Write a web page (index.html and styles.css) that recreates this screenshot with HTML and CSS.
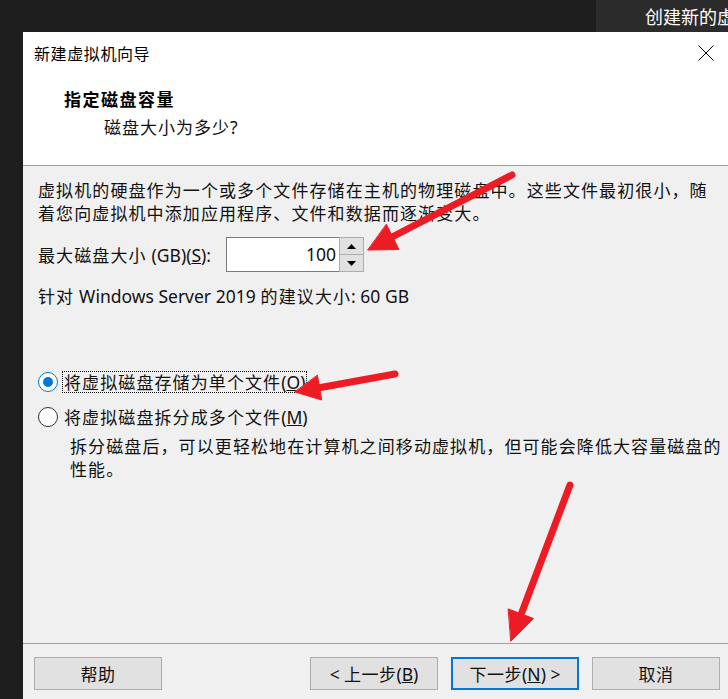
FILE: index.html
```html
<!DOCTYPE html>
<html lang="zh-CN">
<head>
<meta charset="utf-8">
<title>新建虚拟机向导</title>
<link rel="stylesheet" href="styles.css">
</head>
<body>
<div class="screen">
  <div class="topbar">
    <div class="topbar-fill"></div>
    <div class="tab">创建新的虚拟机</div>
  </div>
  <div class="dialog">
    <div class="titlebar">
      <span class="title">新建虚拟机向导</span>
      <svg class="close" width="16" height="16" viewBox="0 0 16 16"><path d="M0.5 0.5 L15.5 15.5 M15.5 0.5 L0.5 15.5" stroke="#000" stroke-width="1" fill="none"/></svg>
    </div>
    <div class="header">
      <div class="h-title">指定磁盘容量</div>
      <div class="h-sub">磁盘大小为多少<span class="lat">?</span></div>
    </div>
    <div class="content">
      <p class="para">虚拟机的硬盘作为一个或多个文件存储在主机的物理磁盘中。这些文件最初很小，随<br>着您向虚拟机中添加应用程序、文件和数据而逐渐变大。</p>
      <div class="size-row">
        <span class="label">最大磁盘大小 <span class="lat">(GB)(<u>S</u>):</span></span>
        <div class="spin">
          <div class="spin-input"><span class="lat">100</span></div>
          <div class="spin-btns">
            <div class="spin-btn"><svg width="9" height="5" viewBox="0 0 9 5"><path d="M0 5 L4.5 0 L9 5 Z" fill="#000"/></svg></div>
            <div class="spin-btn"><svg width="9" height="5" viewBox="0 0 9 5"><path d="M0 0 L4.5 5 L9 0 Z" fill="#000"/></svg></div>
          </div>
        </div>
      </div>
      <p class="recommend">针对 <span class="lat">Windows Server 2019</span> 的建议大小<span class="lat">: 60 GB</span></p>
      <div class="radio-row first">
        <span class="radio checked"></span>
        <span class="radio-label focus">将虚拟磁盘存储为单个文件<span class="lat">(<u>O</u>)</span></span>
      </div>
      <div class="radio-row">
        <span class="radio"></span>
        <span class="radio-label">将虚拟磁盘拆分成多个文件<span class="lat">(<u>M</u>)</span></span>
      </div>
      <p class="desc">拆分磁盘后，可以更轻松地在计算机之间移动虚拟机，但可能会降低大容量磁盘的<br>性能。</p>
    </div>
    <div class="footer">
      <button class="btn">帮助</button>
      <div class="btn-group">
        <button class="btn"><span class="lat">&lt;</span> 上一步<span class="lat">(<u>B</u>)</span></button>
        <button class="btn primary">下一步<span class="lat">(<u>N</u>) &gt;</span></button>
        <button class="btn">取消</button>
      </div>
    </div>
  </div>
  <svg class="annot" width="728" height="699" viewBox="0 0 728 699">
    <g fill="#ed1c24" stroke="#ed1c24" stroke-linecap="round">
      <line x1="512" y1="175" x2="392" y2="237" stroke-width="7"/>
      <polygon points="368,250 399,249.5 386.5,224.5" stroke-width="1"/>
      <line x1="395" y1="374" x2="318" y2="388" stroke-width="7"/>
      <polygon points="295,392 321.7,400 317.5,375.5" stroke-width="1"/>
      <line x1="570" y1="485" x2="522" y2="612" stroke-width="7"/>
      <polygon points="511,641 533.5,618.5 508.5,609" stroke-width="1"/>
    </g>
  </svg>
</div>
</body>
</html>
```

FILE: styles.css
```css
* { box-sizing: border-box; }
html, body { margin: 0; padding: 0; }
body {
  background: #1e1e1e;
  width: 728px;
  height: 699px;
  overflow: hidden;
  font-family: "Noto Sans CJK SC", "Noto Sans", sans-serif;
  color: #000;
}
.screen { position: relative; width: 728px; height: 699px; overflow: hidden; }

.topbar { display: flex; height: 32px; }
.topbar-fill { flex: 1; }
.tab {
  width: 132px;
  background: #2b2b2b;
  color: #ffffff;
  font-size: 18px;
  line-height: 32px;
  padding-left: 49px;
  white-space: nowrap;
  overflow: hidden;
}

.dialog {
  margin-left: 23px;
  width: 720px;
  height: 680px;
  background: #f0f0f0;
  display: flex;
  flex-direction: column;
}
.titlebar {
  background: #fff;
  height: 42px;
  display: flex;
  align-items: center;
  padding-left: 11px;
  padding-right: 29px;
}
.title { flex: 1; font-size: 16px; letter-spacing: 0.6px; }
.close { display: block; }

.header {
  background: #fff;
  height: 92px;
  border-bottom: 1px solid #a0a0a0;
  padding-top: 12px;
}
.h-title {
  padding-left: 41px;
  font-size: 17px;
  font-weight: 700;
  letter-spacing: 1.5px;
  line-height: 26px;
}
.h-sub {
  padding-left: 81px;
  font-size: 17px;
  letter-spacing: 1px;
  line-height: 26px;
  margin-top: 2px;
  color: #111;
}

.lat { font-family: "Noto Sans", "Liberation Sans", sans-serif; letter-spacing: 0; font-size: 17.5px; }

.content {
  height: 477px;
  padding: 12px 0 0 15px;
  font-size: 17px;
  letter-spacing: 1.1px;
  color: #111;
}
.para { margin: 0; line-height: 23px; white-space: nowrap; }

.size-row {
  display: flex;
  align-items: center;
  margin-top: 13px;
  height: 35px;
}
.label { width: 188px; white-space: nowrap; }
.spin { display: flex; height: 35px; }
.spin-input {
  width: 113px;
  height: 35px;
  background: #fff;
  border: 1px solid #7a7a7a;
  border-right: none;
  text-align: right;
  padding-right: 3px;
  line-height: 32px;
}
.spin-btns {
  width: 25px;
  display: flex;
  flex-direction: column;
  border: 1px solid #adadad;
}
.spin-btn {
  flex: 1;
  background: #e1e1e1;
  display: flex;
  align-items: center;
  justify-content: center;
}
.spin-btn + .spin-btn { border-top: 1px solid #adadad; }
.spin-btn svg { display: block; }

.recommend { margin: 12px 0 0; line-height: 23px; white-space: nowrap; }

.radio-row {
  display: flex;
  align-items: center;
  height: 22px;
  margin-top: 13px;
}
.radio-row.first { margin-top: 63px; }
.radio {
  width: 20px;
  height: 20px;
  border-radius: 50%;
  border: 1px solid #333;
  background: #fff;
  position: relative;
  flex: none;
}
.radio.checked { border: 1px solid #0078d7; }
.radio.checked::after {
  content: "";
  position: absolute;
  left: 4px;
  top: 4px;
  width: 10px;
  height: 10px;
  border-radius: 50%;
  background: #0078d7;
}
.radio-label { margin-left: 4px; padding: 0 1px; line-height: 20px; white-space: nowrap; border: 1px solid transparent; }
.radio-label.focus { border: 1px dotted #000; }

.desc { margin: 6px 0 0 32px; line-height: 23px; white-space: nowrap; }

.footer {
  border-top: 1px solid #a0a0a0;
  padding: 13px 23px 0 11px;
  display: flex;
  flex: 1;
}
.btn-group { margin-left: auto; display: flex; gap: 13px; }
.btn {
  width: 128px;
  height: 33px;
  background: #e1e1e1;
  border: 1px solid #adadad;
  font-family: "Noto Sans CJK SC", "Noto Sans", sans-serif;
  font-size: 17px;
  letter-spacing: 0.5px;
  color: #111;
  padding: 0;
  line-height: 30px;
}
.btn.primary { border: 2px solid #0078d7; }

.annot { position: absolute; left: 0; top: 0; pointer-events: none; }
```
